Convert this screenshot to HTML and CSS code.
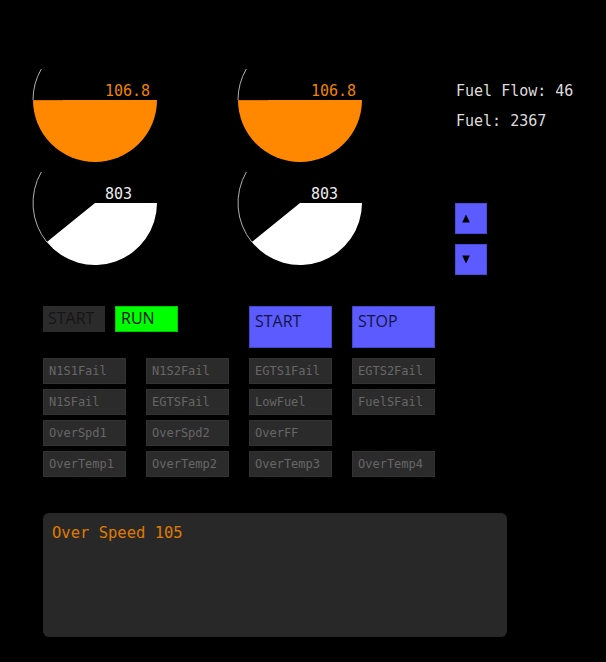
FILE: index.html
```html
<!DOCTYPE html>
<html>
<head>
<meta charset="utf-8">
<link rel="stylesheet" href="styles.css">
</head>
<body>
<div class="page">
  <div class="top">
    <div class="gauges">
      <svg class="gauge" width="126" height="103" viewBox="0 0 126 103">
        <path d="M 1 34 A 62 62 0 0 1 9.31 3" class="arc"/>
        <path d="M 63 34 L 125 34 A 62 62 0 0 1 1 34 Z" class="fill-orange"/>
        <line x1="1" y1="34.5" x2="31" y2="34.5" class="notch"/>
        <text x="73" y="30" class="val val-orange">106.8</text>
      </svg>
      <svg class="gauge" width="126" height="103" viewBox="0 0 126 103">
        <path d="M 1 34 A 62 62 0 0 1 9.31 3" class="arc"/>
        <path d="M 63 34 L 125 34 A 62 62 0 0 1 1 34 Z" class="fill-orange"/>
        <line x1="1" y1="34.5" x2="31" y2="34.5" class="notch"/>
        <text x="74" y="30" class="val val-orange">106.8</text>
      </svg>
      <svg class="gauge" width="126" height="103" viewBox="0 0 126 103">
        <path d="M 14.82 73.02 A 62 62 0 0 1 9.31 3" class="arc"/>
        <path d="M 63 34 L 125 34 A 62 62 0 0 1 14.82 73.02 Z" class="fill-white"/>
        <text x="73" y="30" class="val val-white">803</text>
      </svg>
      <svg class="gauge" width="126" height="103" viewBox="0 0 126 103">
        <path d="M 14.82 73.02 A 62 62 0 0 1 9.31 3" class="arc"/>
        <path d="M 63 34 L 125 34 A 62 62 0 0 1 14.82 73.02 Z" class="fill-white"/>
        <text x="74" y="30" class="val val-white">803</text>
      </svg>
    </div>
    <div class="side">
      <div class="readout">Fuel Flow: 46</div>
      <div class="readout">Fuel: 2367</div>
      <div class="arrows">
        <button class="arrow-btn" aria-label="up">
          <svg width="8" height="9" viewBox="0 0 8 9"><polygon points="4,0.5 7.8,8.5 0.2,8.5" fill="#000"/></svg>
        </button>
        <button class="arrow-btn" aria-label="down">
          <svg width="8" height="9" viewBox="0 0 8 9"><polygon points="0.2,0.5 7.8,0.5 4,8.5" fill="#000"/></svg>
        </button>
      </div>
    </div>
  </div>

  <div class="controls">
    <div class="small-pair">
      <div class="sbtn sbtn-off">START</div>
      <div class="sbtn sbtn-run">RUN</div>
    </div>
    <div class="bbtn">START</div>
    <div class="bbtn">STOP</div>
  </div>

  <div class="faults">
    <div class="fault">N1S1Fail</div>
    <div class="fault">N1S2Fail</div>
    <div class="fault">EGTS1Fail</div>
    <div class="fault">EGTS2Fail</div>
    <div class="fault">N1SFail</div>
    <div class="fault">EGTSFail</div>
    <div class="fault">LowFuel</div>
    <div class="fault">FuelSFail</div>
    <div class="fault">OverSpd1</div>
    <div class="fault">OverSpd2</div>
    <div class="fault">OverFF</div>
    <div class="fault-empty"></div>
    <div class="fault">OverTemp1</div>
    <div class="fault">OverTemp2</div>
    <div class="fault">OverTemp3</div>
    <div class="fault">OverTemp4</div>
  </div>

  <div class="message">Over Speed 105</div>
</div>
</body>
</html>
```

FILE: styles.css
```css
html, body {
  margin: 0;
  padding: 0;
  background: #000;
}

.page {
  width: 606px;
  height: 662px;
  box-sizing: border-box;
  padding-top: 66px;
  overflow: hidden;
}

.top {
  display: flex;
  align-items: flex-start;
  padding-left: 32px;
}

.gauges {
  display: grid;
  grid-template-columns: 126px 126px;
  grid-template-rows: 103px 103px;
  column-gap: 79px;
}

.gauge {
  display: block;
}

.arc {
  fill: none;
  stroke: #b0b0b0;
  stroke-width: 1;
}

.fill-orange {
  fill: #ff8800;
}

.fill-white {
  fill: #ffffff;
}

.notch {
  stroke: #d87400;
  stroke-width: 1;
}

.val {
  font-family: "DejaVu Sans Mono", monospace;
  font-size: 15px;
}

.val-orange {
  fill: #f08400;
}

.val-white {
  fill: #ececec;
}

.side {
  margin-left: 93px;
  padding-top: 10px;
  display: flex;
  flex-direction: column;
  align-items: flex-start;
}

.readout {
  font-family: "DejaVu Sans Mono", monospace;
  font-size: 15px;
  line-height: 30px;
  color: #dcdcdc;
  white-space: nowrap;
}

.arrows {
  margin-top: 67px;
  display: flex;
  flex-direction: column;
  gap: 10px;
}

.arrow-btn {
  width: 32px;
  height: 31px;
  margin: 0 0 0 -1px;
  padding: 0 0 0 6px;
  box-sizing: border-box;
  background: #5b5bff;
  border: 1px solid #4a4ad8;
  display: flex;
  align-items: center;
  justify-content: flex-start;
}

.arrow-btn svg {
  display: block;
}

.controls {
  margin-top: 31px;
  margin-left: 43px;
  display: grid;
  grid-template-columns: 186px 83px 83px;
  column-gap: 20px;
  align-items: start;
}

.small-pair {
  display: flex;
  gap: 10px;
}

.sbtn {
  height: 26px;
  box-sizing: border-box;
  padding: 2px 0 0 5px;
  font-family: "Open Sans", sans-serif;
  font-size: 16px;
  line-height: 20px;
}

.sbtn-off {
  width: 62px;
  background: #2b2b2b;
  color: #151515;
}

.sbtn-run {
  width: 63px;
  background: #00ff00;
  border: 1px solid #00c800;
  padding-top: 1px;
  padding-left: 5px;
  color: #0a0a0a;
}

.bbtn {
  height: 42px;
  box-sizing: border-box;
  background: #5b5bff;
  border: 1px solid #4646cc;
  padding: 4px 0 0 5px;
  font-family: "Open Sans", sans-serif;
  font-size: 16px;
  line-height: 20px;
  color: #141440;
}

.faults {
  margin-top: 10px;
  margin-left: 43px;
  display: grid;
  grid-template-columns: repeat(4, 83px);
  grid-auto-rows: 26px;
  column-gap: 20px;
  row-gap: 5px;
}

.fault {
  box-sizing: border-box;
  background: #2b2b2b;
  border: 1px solid #323232;
  padding-left: 5px;
  display: flex;
  align-items: center;
  font-family: "DejaVu Sans Mono", monospace;
  font-size: 12px;
  color: #676767;
  white-space: nowrap;
}

.message {
  margin-top: 36px;
  margin-left: 43px;
  width: 464px;
  height: 124px;
  box-sizing: border-box;
  background: #282828;
  border-radius: 6px;
  padding: 11px 9px;
  font-family: "DejaVu Sans Mono", monospace;
  font-size: 15.5px;
  line-height: 18px;
  color: #e07a00;
}
```
